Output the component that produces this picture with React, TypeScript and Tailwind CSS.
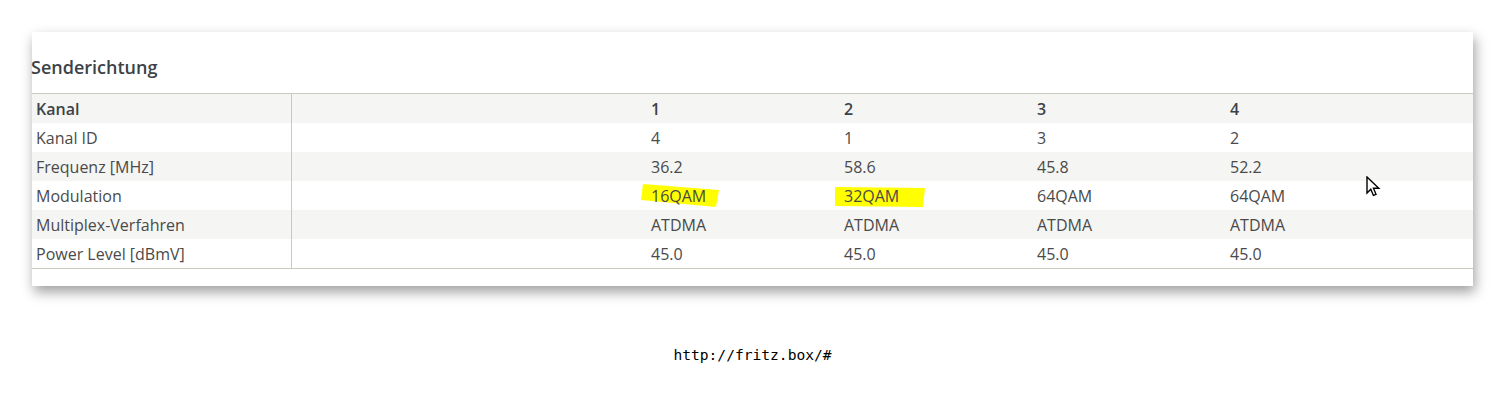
import React from "react";

const rows: { label: string; values: string[]; bold?: boolean; gray: boolean }[] = [
  { label: "Kanal", values: ["1", "2", "3", "4"], bold: true, gray: true },
  { label: "Kanal ID", values: ["4", "1", "3", "2"], gray: false },
  { label: "Frequenz [MHz]", values: ["36.2", "58.6", "45.8", "52.2"], gray: true },
  { label: "Modulation", values: ["16QAM", "32QAM", "64QAM", "64QAM"], gray: false },
  { label: "Multiplex-Verfahren", values: ["ATDMA", "ATDMA", "ATDMA", "ATDMA"], gray: true },
  { label: "Power Level [dBmV]", values: ["45.0", "45.0", "45.0", "45.0"], gray: false },
];

export default function App() {
  return (
    <div className="relative w-[1505px] h-[399px] bg-white overflow-hidden" style={{ fontFamily: "'Open Sans', 'Noto Sans', sans-serif" }}>
      <div className="pt-[32px] pl-[32px]">
        <div className="w-[1441px] h-[254px] bg-white shadow-[2px_6px_12px_rgba(0,0,0,0.38)]">
          <div className="h-[61px] pt-[23px]">
            <h2 className="-ml-[1px] text-[18px] leading-[24px] font-semibold text-[#3d4247]">Senderichtung</h2>
          </div>
          <div className="border-t border-b border-[#c9c9c1] text-[16px] leading-[24px] text-[#4a4a4a]">
            {rows.map((r, i) => (
              <div key={i} className={`flex h-[29px] items-center ${r.gray ? "bg-[#f5f5f3]" : "bg-white"} ${r.bold ? "font-semibold text-[#3d4247]" : ""}`}>
                <div className="w-[260px] h-full flex items-center pl-[4px] border-r border-[#c9c9c1]">{r.label}</div>
                <div className="w-[355px]" />
                {r.values.map((v, j) => (
                  <div key={j} className="relative w-[193px] pl-[4px]">
                    {v === "16QAM" && (
                      <svg className="absolute left-[-6px] top-[0px]" width="90" height="32" viewBox="0 0 90 32">
                        <polygon points="2,0 78,6 75,23 0,16" fill="#ffff00" />
                      </svg>
                    )}
                    {v === "32QAM" && (
                      <svg className="absolute left-[-5px] top-[3px]" width="100" height="30" viewBox="0 0 100 30">
                        <polygon points="0,0 90,1 88,20 0,19" fill="#ffff00" />
                      </svg>
                    )}
                    <span className="relative">{v}</span>
                  </div>
                ))}
              </div>
            ))}
          </div>
        </div>
      </div>
      <div className="mt-[60px] text-center text-[14.6px] leading-[18px] text-black" style={{ fontFamily: "'DejaVu Sans Mono', monospace" }}>
        http://fritz.box/#
      </div>
      <svg className="absolute left-[1366px] top-[176px]" width="15" height="22" viewBox="0 0 15 22">
        <path d="M1 1 L1 17 L4.8 13.2 L7.4 19.4 L10 18.3 L7.5 12.2 L12.8 12.2 Z" fill="white" stroke="black" strokeWidth="1.4" strokeLinejoin="miter" />
      </svg>
    </div>
  );
}
